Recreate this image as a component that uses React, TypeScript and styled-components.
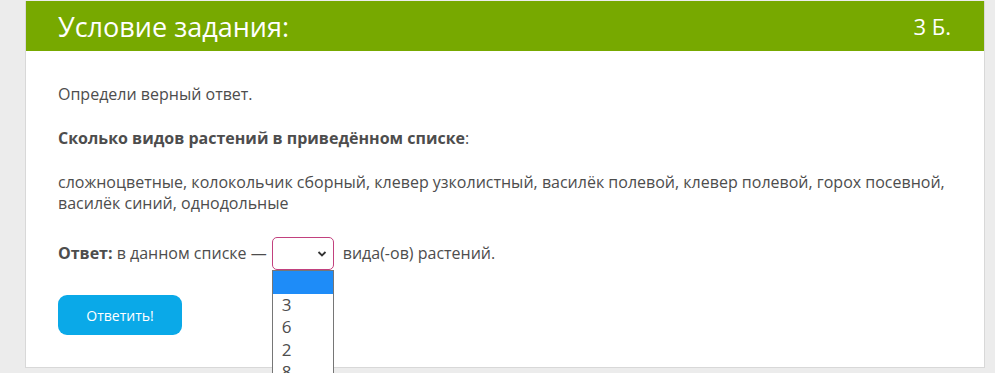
import React from 'react';
import styled, { createGlobalStyle } from 'styled-components';

const GlobalStyle = createGlobalStyle`
  html, body {
    margin: 0;
    padding: 0;
    overflow: hidden;
    background: #ececec;
    font-family: "Open Sans", "Liberation Sans", sans-serif;
  }
`;

const Page = styled.div`
  padding: 1px 0 0 25px;
  height: 372px;
`;

const Card = styled.div`
  width: 958px;
  background: #fff;
  border: 1px solid #d8d8d8;
  border-top: none;
`;

const Header = styled.div`
  display: flex;
  justify-content: space-between;
  align-items: center;
  height: 50px;
  padding: 0 33px 0 32px;
  background: #77a900;
  color: #fff;
`;

const Title = styled.h2`
  margin: 0;
  font-size: 27px;
  font-weight: 400;
`;

const Points = styled.span`
  font-size: 22px;
`;

const Content = styled.div`
  padding: 33px 32px 32px;
  color: #4d4d4d;
  font-size: 16px;
  line-height: 21px;
`;

const Paragraph = styled.p`
  margin: 0 0 23px;
`;

const Bold = styled.b`
  font-weight: 700;
`;

const AnswerRow = styled.div`
  display: flex;
  align-items: center;
  height: 33px;
  margin: 0 0 25px;
`;

const SelectWrap = styled.div`
  position: relative;
  margin: 0 9px 0 5px;
`;

const SelectBox = styled.div`
  box-sizing: border-box;
  width: 62px;
  height: 33px;
  border: 1px solid #c2417e;
  border-radius: 5px;
  display: flex;
  align-items: center;
  justify-content: flex-end;
  padding-right: 6px;
  background: #fff;
`;

const OptionList = styled.ul`
  position: absolute;
  top: 33px;
  left: 0;
  box-sizing: border-box;
  width: 62px;
  margin: 0;
  padding: 0;
  list-style: none;
  background: #fff;
  border: 1px solid #767676;
  font-size: 17px;
  line-height: 22.5px;
  color: #4d4d4d;
`;

const Option = styled.li<{ $active?: boolean }>`
  height: 22.5px;
  padding-left: 9px;
  background: ${p => (p.$active ? '#1e8cf8' : 'transparent')};
  color: ${p => (p.$active ? '#fff' : '#4d4d4d')};
`;

const SubmitButton = styled.button`
  width: 124px;
  height: 40px;
  border: none;
  border-radius: 9px;
  background: #0aa9e8;
  color: #fff;
  font-family: "Open Sans", "Liberation Sans", sans-serif;
  font-size: 14px;
  cursor: pointer;
`;

const options = ['', '3', '6', '2', '8', '5'];

const Chevron = () => (
  <svg width="10" height="8" viewBox="0 0 10 8">
    <path d="M1.5 2 L5 5.5 L8.5 2" fill="none" stroke="#333" strokeWidth="1.8" />
  </svg>
);

export default function App() {
  return (
    <Page>
      <GlobalStyle />
      <Card>
        <Header>
          <Title>Условие задания:</Title>
          <Points>3 Б.</Points>
        </Header>
        <Content>
          <Paragraph>Определи верный ответ.</Paragraph>
          <Paragraph>
            <Bold>Сколько видов растений в приведённом списке</Bold>:
          </Paragraph>
          <Paragraph>
            сложноцветные, колокольчик сборный, клевер узколистный, василёк полевой, клевер полевой, горох посевной,
            василёк синий, однодольные
          </Paragraph>
          <AnswerRow>
            <Bold>Ответ:</Bold>&nbsp;в данном списке —
            <SelectWrap>
              <SelectBox>
                <Chevron />
              </SelectBox>
              <OptionList>
                {options.map((o, i) => (
                  <Option key={i} $active={i === 0}>
                    {o}
                  </Option>
                ))}
              </OptionList>
            </SelectWrap>
            вида(-ов) растений.
          </AnswerRow>
          <SubmitButton>Ответить!</SubmitButton>
        </Content>
      </Card>
    </Page>
  );
}
